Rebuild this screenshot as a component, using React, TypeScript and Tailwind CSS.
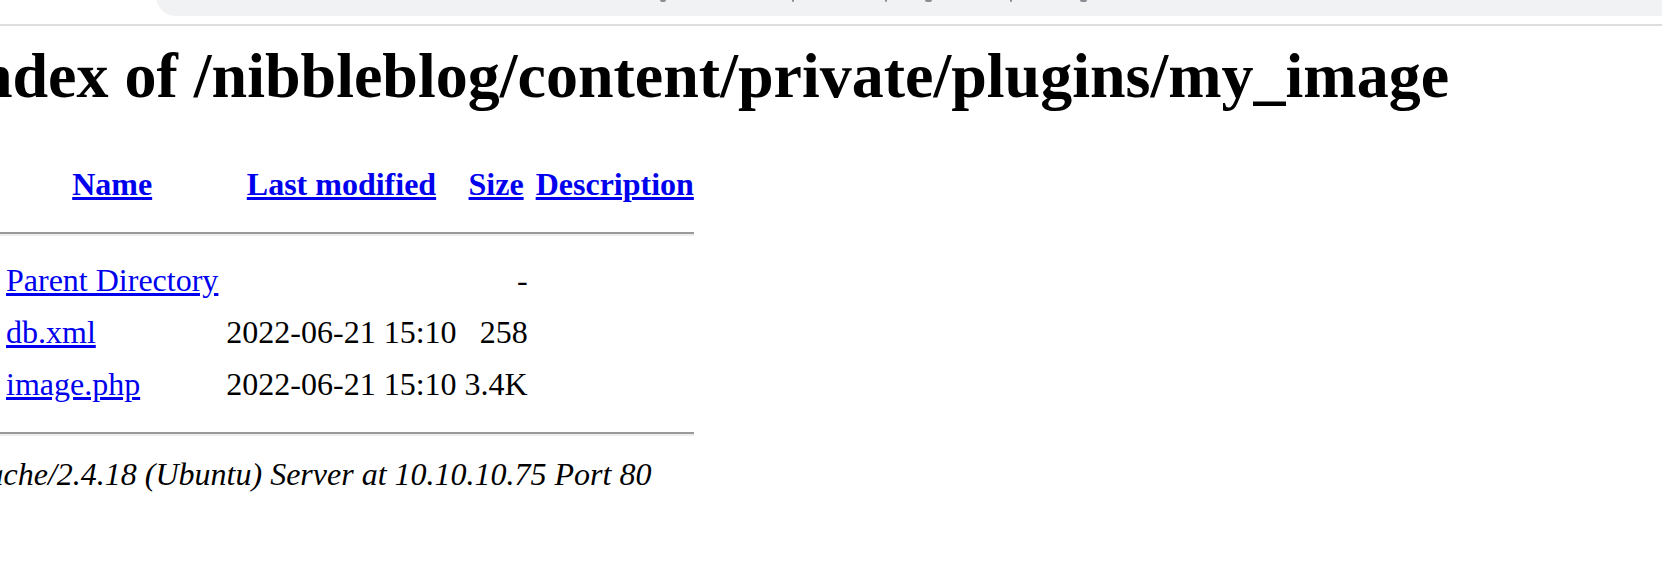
export default function App() {
  const rows = [
    { name: "Parent Directory", date: "", size: "-" },
    { name: "db.xml", date: "2022-06-21 15:10", size: "258" },
    { name: "image.php", date: "2022-06-21 15:10", size: "3.4K" },
  ]

  // bits of url text peeking out under the top edge
  const marks = [
    { left: "left-[504px]", w: "w-[6px]" },
    { left: "left-[636px]", w: "w-[2px]" },
    { left: "left-[729px]", w: "w-[2px]" },
    { left: "left-[769px]", w: "w-[7px]" },
    { left: "left-[854px]", w: "w-[2px]" },
    { left: "left-[924px]", w: "w-[7px]" },
  ]

  const rule = (
    <tr>
      <th colSpan={5} className="p-[2px]">
        <div className="mt-[18px] mb-[14px] h-[4px] border-t-2 border-b-2 border-t-[#9a9a9a] border-b-[#eeeeee]" />
      </th>
    </tr>
  )

  return (
    <div className="relative h-[586px] w-[1662px] overflow-hidden bg-white font-['Liberation_Serif',serif] text-black">
      <div className="relative h-[24px] bg-white">
        <div className="absolute left-[156px] right-0 top-[-24px] h-[40px] rounded-l-[20px] bg-[#f1f2f4]">
          {marks.map((m, i) => (
            <span key={i} className={`absolute top-[24px] h-[2px] rounded-b-sm bg-[#8a8d91] ${m.left} ${m.w}`} />
          ))}
        </div>
      </div>
      <div className="h-[2px] bg-[#dedede]" />

      <div className="ml-[-48px] pt-[13px] leading-[normal]">
        <h1 className="mb-[43px] whitespace-nowrap text-[64px] font-bold">
          Index of /nibbleblog/content/private/plugins/my_image
        </h1>

        <table className="border-separate border-spacing-[4px] text-[32px]">
          <tbody>
            <tr>
              <th className="p-[2px] align-top">
                <div className="h-[44px] w-[40px]" />
              </th>
              <th className="p-[2px] text-center align-middle font-bold">
                <a className="text-[#0000ee] underline">Name</a>
              </th>
              <th className="p-[2px] text-center align-middle font-bold">
                <a className="text-[#0000ee] underline">Last modified</a>
              </th>
              <th className="p-[2px] text-center align-middle font-bold">
                <a className="text-[#0000ee] underline">Size</a>
              </th>
              <th className="p-[2px] text-center align-middle font-bold">
                <a className="text-[#0000ee] underline">Description</a>
              </th>
            </tr>
            {rule}
            {rows.map((r) => (
              <tr key={r.name}>
                <td className="p-[2px] align-top">
                  <div className="h-[44px] w-[40px]" />
                </td>
                <td className="p-[2px] align-middle">
                  <a className="text-[#0000ee] underline">{r.name}</a>
                </td>
                <td className="whitespace-nowrap p-[2px] text-right align-middle">{r.date || "\u00a0"}</td>
                <td className="p-[2px] text-right align-middle">{r.size}</td>
                <td className="p-[2px] align-middle">{"\u00a0"}</td>
              </tr>
            ))}
            {rule}
          </tbody>
        </table>

        <address className="whitespace-nowrap text-[32px] italic">
          Apache/2.4.18 (Ubuntu) Server at 10.10.10.75 Port 80
        </address>
      </div>
    </div>
  )
}
